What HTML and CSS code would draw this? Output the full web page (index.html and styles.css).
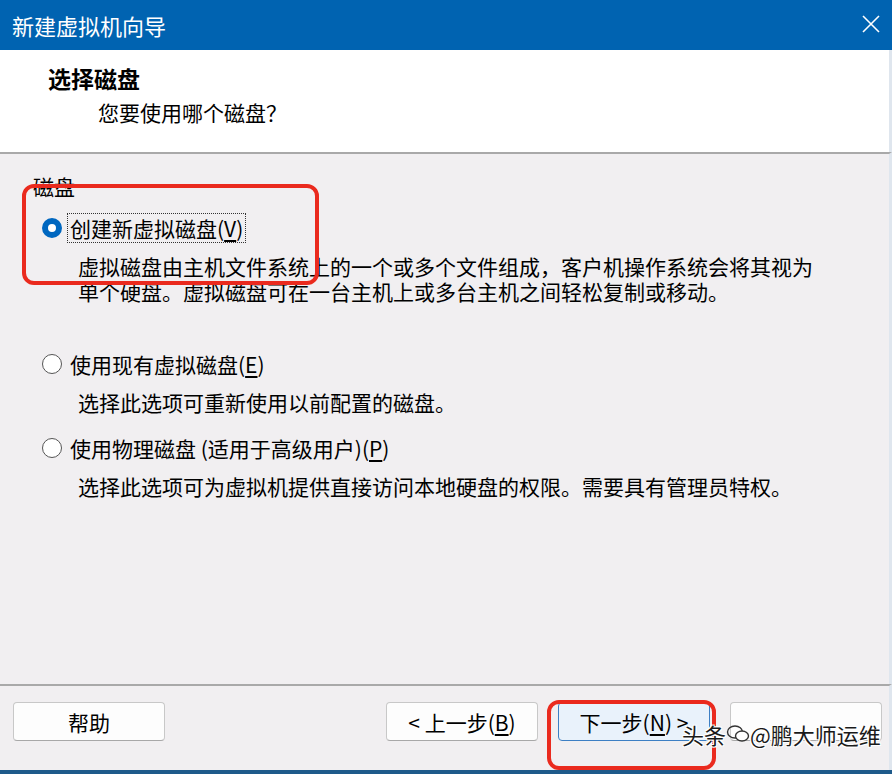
FILE: index.html
```html
<!DOCTYPE html>
<html>
<head>
<meta charset="utf-8">
<title>新建虚拟机向导</title>
<link rel="stylesheet" href="styles.css">
</head>
<body>
<div class="window">
	<div class="titlebar">
		<span class="title">新建虚拟机向导</span>
		<svg class="close" width="20" height="20" viewBox="0 0 20 20">
			<path d="M2 2 L18 18 M18 2 L2 18" stroke="#ffffff" stroke-width="1.6" fill="none"/>
		</svg>
	</div>

	<div class="header">
		<div class="heading">选择磁盘</div>
		<div class="subheading">您要使用哪个磁盘？</div>
	</div>

	<div class="content">
		<div class="group-label">磁盘</div>

		<div class="option">
			<span class="radio checked"></span>
			<span class="label focused">创建新虚拟磁盘(<u>V</u>)</span>
		</div>
		<div class="desc">虚拟磁盘由主机文件系统上的一个或多个文件组成，客户机操作系统会将其视为<br>单个硬盘。虚拟磁盘可在一台主机上或多台主机之间轻松复制或移动。</div>

		<div class="option gap-big">
			<span class="radio"></span>
			<span class="label">使用现有虚拟磁盘(<u>E</u>)</span>
		</div>
		<div class="desc">选择此选项可重新使用以前配置的磁盘。</div>

		<div class="option gap-mid">
			<span class="radio"></span>
			<span class="label">使用物理磁盘 (适用于高级用户)(<u>P</u>)</span>
		</div>
		<div class="desc">选择此选项可为虚拟机提供直接访问本地硬盘的权限。需要具有管理员特权。</div>
	</div>

	<div class="footer">
		<button class="btn">帮助</button>
		<div class="btn-group">
			<button class="btn">&lt; 上一步(<u>B</u>)</button>
			<button class="btn default">下一步(<u>N</u>) &gt;</button>
			<button class="btn cancel"></button>
		</div>
	</div>
	<div class="bottom-edge"></div>

	<div class="mark mark-top"></div>
	<div class="mark mark-next"></div>

	<div class="watermark">
		<span>头条</span>
		<svg width="24" height="22" viewBox="0 0 24 22">
			<ellipse cx="9" cy="9" rx="7.5" ry="6" fill="none" stroke="#333" stroke-width="1.4"/>
			<ellipse cx="16" cy="13" rx="6.5" ry="5" fill="#fff" stroke="#333" stroke-width="1.4"/>
		</svg>
		<span>@鹏大师运维</span>
	</div>
</div>
</body>
</html>
```

FILE: styles.css
```css
	body{
		margin: 0;
		background-color: #f1eff1;
		font-family: "Noto Sans CJK SC", "Noto Sans", sans-serif;
		color: #000000;
	}
	.window{
		position: relative;
		width: 892px;
		height: 774px;
		overflow: hidden;
		display: flex;
		flex-direction: column;
		background-color: #f1eff1;
	}
	.titlebar{
		height: 50px;
		flex: none;
		background-color: #0063b1;
		display: flex;
		align-items: center;
		justify-content: space-between;
		padding: 0 11px 0 12px;
	}
	.title{
		color: #ffffff;
		font-size: 22px;
		line-height: 28px;
	}
	.close{
		display: block;
		margin-bottom: 2px;
	}

	.header{
		height: 102px;
		flex: none;
		box-sizing: border-box;
		background-color: #ffffff;
		border-right: 3px solid #dfe6ee;
		padding-top: 14px;
	}
	.heading{
		padding-left: 48px;
		font-size: 23px;
		font-weight: bold;
		line-height: 28px;
	}
	.subheading{
		margin-top: 6px;
		padding-left: 98px;
		font-size: 21px;
		line-height: 28px;
	}

	.content{
		flex: 1;
		border-top: 2px solid #a9a9a9;
		border-right: 3px solid #dfe6ee;
		padding-top: 19px;
		font-size: 21px;
	}
	.group-label{
		padding-left: 33px;
		line-height: 26px;
	}
	.option{
		display: flex;
		align-items: center;
		gap: 5px;
		margin-top: 14px;
		padding-left: 42px;
		height: 30px;
	}
	.option.gap-big{ margin-top: 45px; }
	.option.gap-mid{ margin-top: 18px; }
	.radio{
		width: 20px;
		height: 20px;
		box-sizing: border-box;
		border-radius: 50%;
		border: 1.5px solid #555555;
		background-color: #ffffff;
		flex: none;
	}
	.radio.checked{
		border: 6px solid #0067c0;
		background-color: #ffffff;
	}
	.label{
		line-height: 28px;
		padding: 0 2px;
		border: 1px dotted transparent;
	}
	.label.focused{
		border-color: #333333;
	}
	.label u{
		text-underline-offset: 3px;
	}
	.desc{
		margin-top: 11px;
		padding-left: 78px;
		line-height: 25px;
	}

	.footer{
		height: 68px;
		flex: none;
		border-top: 2px solid #a9a9a9;
		border-right: 3px solid #dfe6ee;
		display: flex;
		align-items: flex-start;
		justify-content: space-between;
		padding: 16px 7px 0 13px;
	}
	.btn-group{
		display: flex;
		gap: 20px;
	}
	.btn{
		width: 152px;
		height: 39px;
		box-sizing: border-box;
		background-color: #fdfdfd;
		border: 1px solid #c8c8c8;
		border-bottom-color: #a8a8a8;
		border-radius: 4px;
		font-family: "Noto Sans CJK SC", "Noto Sans", sans-serif;
		font-size: 21px;
		color: #000000;
		padding: 0;
	}
	.btn u{
		text-underline-offset: 3px;
	}
	.btn.default{
		background-color: #e9f2fb;
		border: 1.5px solid #3d7fc4;
	}
	.bottom-edge{
		height: 4px;
		flex: none;
		background-color: #1e5a8a;
	}

	.mark{
		position: absolute;
		box-sizing: border-box;
		border: 4px solid #ea2a1e;
		border-radius: 12px;
	}
	.mark-top{
		left: 22px;
		top: 184px;
		width: 297px;
		height: 101px;
	}
	.mark-next{
		left: 547px;
		top: 700px;
		width: 169px;
		height: 70px;
	}

	.watermark{
		position: absolute;
		left: 682px;
		top: 719px;
		display: flex;
		align-items: center;
		font-size: 22px;
		line-height: 30px;
		color: #1a1a1a;
		text-shadow: 1px 1px 0 #fff, -1px -1px 0 #fff, 1px -1px 0 #fff, -1px 1px 0 #fff;
	}
```
